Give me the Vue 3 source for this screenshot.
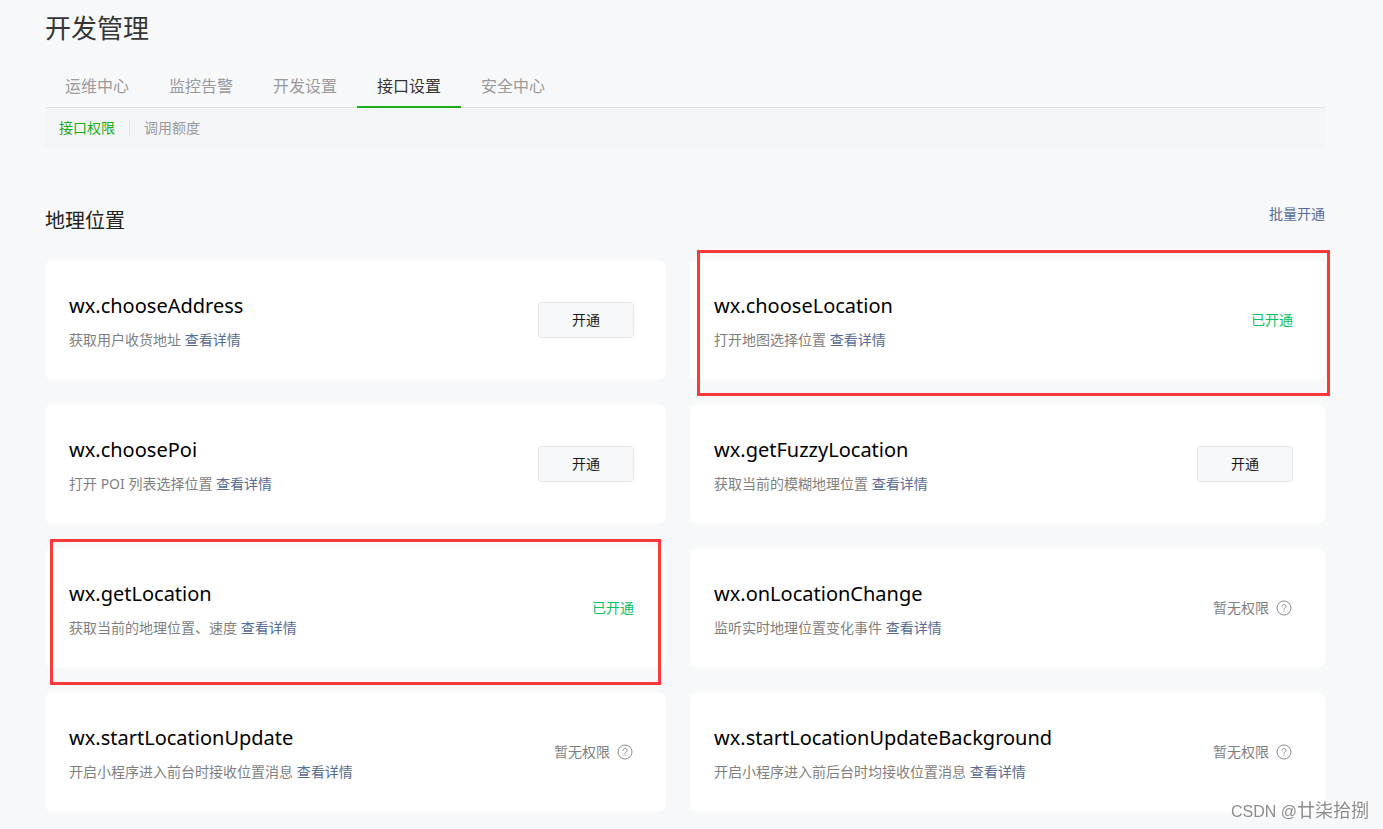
<script setup>
import { ref } from 'vue'

const tabs = ['运维中心', '监控告警', '开发设置', '接口设置', '安全中心']
const activeTab = ref('接口设置')
const subTabs = ['接口权限', '调用额度']
const activeSub = ref('接口权限')

const apis = [
  { name: 'wx.chooseAddress', desc: '获取用户收货地址', status: 'closed' },
  { name: 'wx.chooseLocation', desc: '打开地图选择位置', status: 'open', mark: 'mark-a' },
  { name: 'wx.choosePoi', desc: '打开 POI 列表选择位置', status: 'closed' },
  { name: 'wx.getFuzzyLocation', desc: '获取当前的模糊地理位置', status: 'closed' },
  { name: 'wx.getLocation', desc: '获取当前的地理位置、速度', status: 'open', mark: 'mark-b' },
  { name: 'wx.onLocationChange', desc: '监听实时地理位置变化事件', status: 'denied' },
  { name: 'wx.startLocationUpdate', desc: '开启小程序进入前台时接收位置消息', status: 'denied' },
  { name: 'wx.startLocationUpdateBackground', desc: '开启小程序进入前后台时均接收位置消息', status: 'denied' },
]
</script>

<template>
  <main class="page">
    <h1 class="title">开发管理</h1>
    <nav class="tabs">
      <button
        v-for="t in tabs"
        :key="t"
        type="button"
        class="tab"
        :class="{ active: t === activeTab }"
        @click="activeTab = t"
      >{{ t }}</button>
    </nav>
    <nav class="subtabs">
      <button
        v-for="t in subTabs"
        :key="t"
        type="button"
        class="subtab"
        :class="{ active: t === activeSub }"
        @click="activeSub = t"
      >{{ t }}</button>
    </nav>

    <section>
      <header class="section-head">
        <h2 class="section-title">地理位置</h2>
        <a class="link" href="#">批量开通</a>
      </header>
      <div class="grid">
        <article v-for="a in apis" :key="a.name" class="card">
          <div class="info">
            <h3 class="name">{{ a.name }}</h3>
            <p class="desc">{{ a.desc }} <a class="link" href="#">查看详情</a></p>
          </div>
          <button v-if="a.status === 'closed'" type="button" class="open-btn">开通</button>
          <span v-else-if="a.status === 'open'" class="opened">已开通</span>
          <span v-else class="denied">
            暂无权限
            <svg class="help" viewBox="0 0 16 16" fill="none" stroke="currentColor" aria-hidden="true">
              <circle cx="8" cy="8" r="7" />
              <path d="M6 6.6C6 5.3 6.8 4.6 8 4.6s2 .7 2 1.8c0 .8-.4 1.2-1.1 1.7-.6.4-.9.7-.9 1.5" />
              <path d="M8 10.4v1.2" />
            </svg>
          </span>
          <i v-if="a.mark" class="mark" :class="a.mark"></i>
        </article>
      </div>
    </section>
    <div class="watermark"><span class="latin">CSDN @</span>廿柒拾捌</div>
  </main>
</template>

<style>
body {
  background: #f7f8fa;
}
</style>

<style scoped>
.page {
  padding: 8px 58px 17px 45px;
  font-family: "Noto Sans", "Noto Sans CJK SC", sans-serif;
  font-size: 14px;
  line-height: 20px;
  color: #353535;
}
button {
  font-family: inherit;
  cursor: pointer;
}
h1, h2, h3, p {
  margin: 0;
  font-weight: 400;
}
.title {
  font-size: 26px;
  line-height: 40px;
}
.tabs {
  display: flex;
  margin-top: 18px;
  border-bottom: 1px solid #e4e6e8;
}
.tab {
  margin-bottom: -1px;
  padding: 8px 20px;
  border: 0;
  border-bottom: 2px solid transparent;
  background: none;
  font-size: 16px;
  line-height: 24px;
  color: #9a9a9a;
}
.tab.active {
  color: #353535;
  border-bottom-color: #1aad19;
}
.subtabs {
  display: flex;
  align-items: center;
  height: 40px;
  background: #f4f5f7;
}
.subtab {
  padding: 0 14px;
  border: 0;
  background: none;
  font-size: 14px;
  line-height: 14px;
  color: #9a9a9a;
}
.subtab + .subtab {
  border-left: 1px solid #e4e6e8;
}
.subtab.active {
  color: #1aad19;
}
.section-head {
  display: flex;
  justify-content: space-between;
  margin-top: 56px;
}
.section-title {
  padding-bottom: 22px;
  font-size: 20px;
  line-height: 34px;
  color: #222;
}
.link {
  color: #576b95;
  text-decoration: none;
}
.grid {
  display: grid;
  grid-template-columns: 621fr 635fr;
  gap: 24px;
}
.card {
  position: relative;
  display: flex;
  align-items: center;
  justify-content: space-between;
  padding: 29px 32px 29px 24px;
  border-radius: 8px;
  background: #fff;
}
.name {
  font-size: 20px;
  line-height: 34px;
  color: #000;
}
.desc {
  margin-top: 6px;
  line-height: 22px;
  color: #7f7f7f;
}
.open-btn {
  width: 96px;
  height: 36px;
  padding: 0 0 2px;
  border: 1px solid #e4e6e8;
  border-radius: 4px;
  background: #f7f8fa;
  font-size: 14px;
  color: #1a1a1a;
}
.opened {
  color: #07c160;
}
.denied {
  display: flex;
  align-items: center;
  gap: 7px;
  color: #7f7f7f;
}
.help {
  width: 16px;
  height: 16px;
  margin-right: 1px;
  color: #888;
}
.mark {
  position: absolute;
  border: 3px solid #fa3a3a;
  pointer-events: none;
}
.mark-a {
  inset: -10px -5px -16px 7px;
}
.mark-b {
  inset: -9px 5px -17px 5px;
}
.watermark {
  position: fixed;
  right: 14px;
  bottom: 5px;
  font-size: 18px;
  line-height: 24px;
  color: #8c8c8c;
  text-shadow: -1px -1px 0 #fff;
}
.latin {
  font-family: "Liberation Sans", sans-serif;
  font-size: 16px;
}
</style>
